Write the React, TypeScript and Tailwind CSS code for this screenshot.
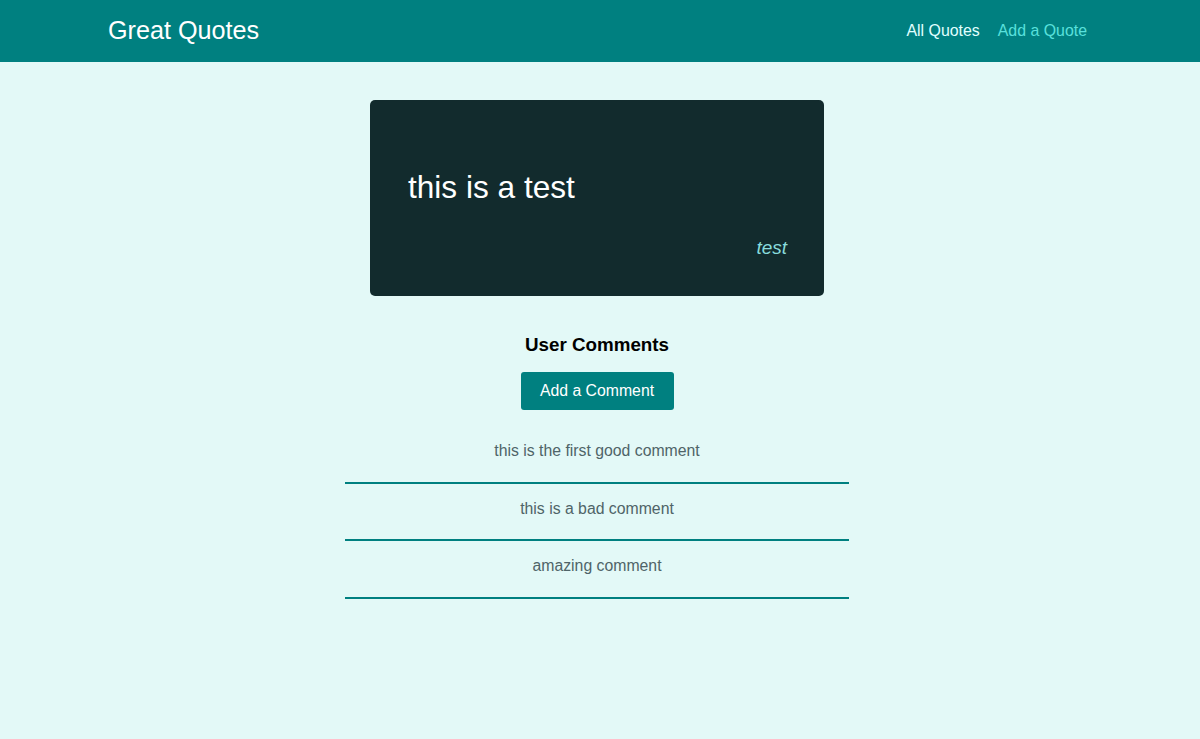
export default function App() {
  return (
    <div className="min-h-[739px] bg-[#e3f9f7] font-['Liberation_Sans',sans-serif]">
      <header className="h-[62px] bg-[#008080] flex items-center justify-between pl-[108px] pr-[113px]">
        <div className="text-[25.2px] text-white">Great Quotes</div>
        <nav className="flex gap-[18px] text-[15.9px]">
          <a className="text-[#e0ffff]">All Quotes</a>
          <a className="text-[#59e0dc]">Add a Quote</a>
        </nav>
      </header>
      <div className="w-[1194px]">
        <main className="w-[504px] mx-auto flex flex-col items-center pt-[38px]">
          <figure className="w-[454px] h-[196px] bg-[#122b2d] rounded-[5px] pl-[38px] pr-[37px] pt-[67px] flex flex-col">
            <p className="text-[31.6px] leading-[40px] text-white">this is a test</p>
            <figcaption className="text-[19px] italic text-[#88dcdc] text-right mt-[27px]">test</figcaption>
          </figure>
          <h2 className="text-[18.8px] font-bold text-black mt-[38px] leading-[22px]">User Comments</h2>
          <button className="mt-[16px] h-[38px] w-[153px] bg-[#008080] text-white rounded-[3px] text-[15.8px]">Add a Comment</button>
          <ul className="w-full mt-[16px]">
            {["this is the first good comment", "this is a bad comment", "amazing comment"].map((c) => (
              <li key={c} className="h-[57.5px] border-b-2 border-[#008080] text-center text-[15.8px] text-[#4f6468] pt-[15px] leading-[19px]">{c}</li>
            ))}
          </ul>
        </main>
      </div>
    </div>
  );
}
